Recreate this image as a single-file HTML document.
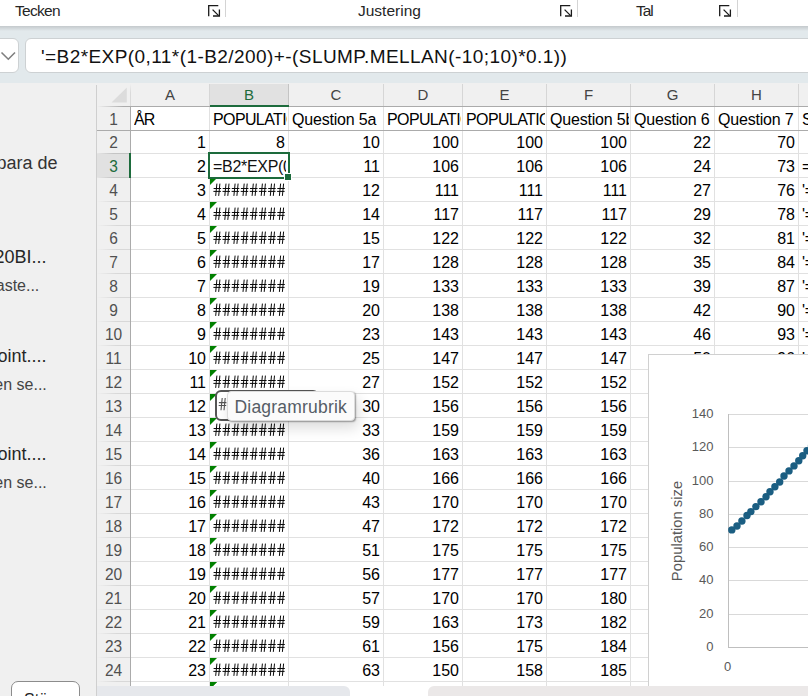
<!DOCTYPE html>
<html><head><meta charset="utf-8"><style>
html,body{margin:0;padding:0;width:808px;height:696px;overflow:hidden;background:#f0f0f0;position:relative;}
.t{position:absolute;white-space:pre;font-family:"Liberation Sans", sans-serif;}
.c{position:absolute;white-space:pre;overflow:hidden;font-family:"Liberation Sans", sans-serif;font-size:16px;line-height:24px;height:24px;transform:scaleY(1.06);transform-origin:0 17.54px;}
</style></head><body>
<div style="position:absolute;left:0px;top:0px;width:808px;height:26px;background:#fff;"></div>
<div class="t" style="left:15px;top:2.88px;font-size:15.5px;line-height:15.5px;color:#262626;letter-spacing:-0.7px;">Tecken</div>
<div class="t" style="left:358px;top:2.88px;font-size:15.5px;line-height:15.5px;color:#262626;">Justering</div>
<div class="t" style="left:636px;top:2.88px;font-size:15.5px;line-height:15.5px;color:#262626;letter-spacing:-1px;">Tal</div>
<svg style="position:absolute;left:207.5px;top:4px" width="14" height="14" viewBox="0 0 14 14"><path d="M0.7 12.2 V1.7 H10.3" fill="none" stroke="#1a1a1a" stroke-width="1.3"/><path d="M4.6 5.6 L10.6 11.6" fill="none" stroke="#1a1a1a" stroke-width="1.3"/><path d="M5 12 H11.4 V5.5" fill="none" stroke="#1a1a1a" stroke-width="1.3"/></svg>
<svg style="position:absolute;left:559.5px;top:4px" width="14" height="14" viewBox="0 0 14 14"><path d="M0.7 12.2 V1.7 H10.3" fill="none" stroke="#1a1a1a" stroke-width="1.3"/><path d="M4.6 5.6 L10.6 11.6" fill="none" stroke="#1a1a1a" stroke-width="1.3"/><path d="M5 12 H11.4 V5.5" fill="none" stroke="#1a1a1a" stroke-width="1.3"/></svg>
<svg style="position:absolute;left:719px;top:4px" width="14" height="14" viewBox="0 0 14 14"><path d="M0.7 12.2 V1.7 H10.3" fill="none" stroke="#1a1a1a" stroke-width="1.3"/><path d="M4.6 5.6 L10.6 11.6" fill="none" stroke="#1a1a1a" stroke-width="1.3"/><path d="M5 12 H11.4 V5.5" fill="none" stroke="#1a1a1a" stroke-width="1.3"/></svg>
<div style="position:absolute;left:225px;top:0px;width:1px;height:17px;background:#d4d4d4;"></div>
<div style="position:absolute;left:577px;top:0px;width:1px;height:17px;background:#d4d4d4;"></div>
<div style="position:absolute;left:737px;top:0px;width:1px;height:17px;background:#d4d4d4;"></div>
<div style="position:absolute;left:0px;top:26px;width:808px;height:57px;background:#e2e9ec;"></div>
<div style="position:absolute;left:0px;top:26px;width:808px;height:5px;background:linear-gradient(#c4c9cc,#e2e9ec);"></div>
<div style="position:absolute;left:-20px;top:38px;width:39px;height:35px;background:#fff;border:1px solid #cdd1d3;border-radius:6px;box-sizing:border-box;"></div>
<svg style="position:absolute;left:0px;top:50px" width="18" height="12" viewBox="0 0 18 12"><path d="M1.5 2.5 L8.3 9.2 L15 2.5" fill="none" stroke="#7f7f7f" stroke-width="1.6"/></svg>
<div style="position:absolute;left:25px;top:38px;width:800px;height:35px;background:#fff;border:1px solid #cdd1d3;border-radius:6px;box-sizing:border-box;"></div>
<div class="t" style="left:41px;top:46.52px;font-size:19px;line-height:19px;color:#111;letter-spacing:0.43px;">'=B2*EXP(0,11*(1-B2/200)+-(SLUMP.MELLAN(-10;10)*0.1))</div>
<div style="position:absolute;left:0px;top:83px;width:96px;height:613px;background:#f0f0f0;"></div>
<div class="t" style="right:750.5px;top:153.76px;font-size:18px;line-height:18px;color:#333;">para de</div>
<div class="t" style="right:761.5px;top:247.76px;font-size:18px;line-height:18px;color:#262626;">20BI...</div>
<div class="t" style="right:768.7px;top:278.46px;font-size:16px;line-height:16px;color:#444;">aste...</div>
<div class="t" style="right:761.5px;top:347.26px;font-size:18px;line-height:18px;color:#262626;">oint....</div>
<div class="t" style="right:761.2px;top:377.46px;font-size:16px;line-height:16px;color:#444;">en se...</div>
<div class="t" style="right:761.5px;top:445.26px;font-size:18px;line-height:18px;color:#262626;">oint....</div>
<div class="t" style="right:761.2px;top:475.46px;font-size:16px;line-height:16px;color:#444;">en se...</div>
<div style="position:absolute;left:11px;top:681px;width:69px;height:30px;background:#fff;border:1px solid #8c8c8c;border-radius:7px;box-sizing:border-box;"></div>
<div class="t" style="left:24px;top:692.46px;font-size:16px;line-height:16px;color:#222;">Stä...</div>
<div style="position:absolute;left:96px;top:83px;width:712px;height:603px;background:#f0f0f0;"></div>
<div style="position:absolute;left:131px;top:107px;width:677px;height:579px;background:#fff;"></div>
<div style="position:absolute;left:96px;top:85px;width:1px;height:611px;background:#cfcfcf;"></div>
<svg style="position:absolute;left:111px;top:87px" width="17" height="17"><path d="M0.5 15.5 L15.8 0.5 L15.8 15.5 Z" fill="#dcdcdc"/></svg>
<div style="position:absolute;left:210px;top:84px;width:78px;height:22px;background:#e1e1e1;"></div>
<div style="position:absolute;left:97px;top:154px;width:33px;height:23px;background:#e1e1e1;"></div>
<div style="position:absolute;left:209px;top:107px;width:1px;height:579px;background:#e1e1e1;"></div>
<div style="position:absolute;left:209px;top:84px;width:1px;height:22px;background:#d6d6d6;"></div>
<div style="position:absolute;left:288px;top:107px;width:1px;height:579px;background:#e1e1e1;"></div>
<div style="position:absolute;left:288px;top:84px;width:1px;height:22px;background:#c4c4c4;"></div>
<div style="position:absolute;left:383px;top:107px;width:1px;height:579px;background:#e1e1e1;"></div>
<div style="position:absolute;left:383px;top:84px;width:1px;height:22px;background:#d6d6d6;"></div>
<div style="position:absolute;left:462px;top:107px;width:1px;height:579px;background:#e1e1e1;"></div>
<div style="position:absolute;left:462px;top:84px;width:1px;height:22px;background:#d6d6d6;"></div>
<div style="position:absolute;left:546px;top:107px;width:1px;height:579px;background:#e1e1e1;"></div>
<div style="position:absolute;left:546px;top:84px;width:1px;height:22px;background:#d6d6d6;"></div>
<div style="position:absolute;left:630px;top:107px;width:1px;height:579px;background:#e1e1e1;"></div>
<div style="position:absolute;left:630px;top:84px;width:1px;height:22px;background:#d6d6d6;"></div>
<div style="position:absolute;left:714px;top:107px;width:1px;height:579px;background:#e1e1e1;"></div>
<div style="position:absolute;left:714px;top:84px;width:1px;height:22px;background:#d6d6d6;"></div>
<div style="position:absolute;left:798px;top:107px;width:1px;height:579px;background:#e1e1e1;"></div>
<div style="position:absolute;left:798px;top:84px;width:1px;height:22px;background:#d6d6d6;"></div>
<div style="position:absolute;left:131px;top:153px;width:677px;height:1px;background:#e1e1e1;"></div>
<div style="position:absolute;left:97px;top:153px;width:33px;height:1px;background:linear-gradient(to right, rgba(190,190,190,0.2), #c4c4c4 50%);"></div>
<div style="position:absolute;left:131px;top:177px;width:677px;height:1px;background:#e1e1e1;"></div>
<div style="position:absolute;left:97px;top:177px;width:33px;height:1px;background:linear-gradient(to right, rgba(190,190,190,0.2), #c4c4c4 50%);"></div>
<div style="position:absolute;left:131px;top:201px;width:677px;height:1px;background:#e1e1e1;"></div>
<div style="position:absolute;left:97px;top:201px;width:33px;height:1px;background:linear-gradient(to right, rgba(218,218,218,0), #d8d8d8 60%);"></div>
<div style="position:absolute;left:131px;top:225px;width:677px;height:1px;background:#e1e1e1;"></div>
<div style="position:absolute;left:97px;top:225px;width:33px;height:1px;background:linear-gradient(to right, rgba(218,218,218,0), #d8d8d8 60%);"></div>
<div style="position:absolute;left:131px;top:249px;width:677px;height:1px;background:#e1e1e1;"></div>
<div style="position:absolute;left:97px;top:249px;width:33px;height:1px;background:linear-gradient(to right, rgba(218,218,218,0), #d8d8d8 60%);"></div>
<div style="position:absolute;left:131px;top:273px;width:677px;height:1px;background:#e1e1e1;"></div>
<div style="position:absolute;left:97px;top:273px;width:33px;height:1px;background:linear-gradient(to right, rgba(218,218,218,0), #d8d8d8 60%);"></div>
<div style="position:absolute;left:131px;top:297px;width:677px;height:1px;background:#e1e1e1;"></div>
<div style="position:absolute;left:97px;top:297px;width:33px;height:1px;background:linear-gradient(to right, rgba(218,218,218,0), #d8d8d8 60%);"></div>
<div style="position:absolute;left:131px;top:321px;width:677px;height:1px;background:#e1e1e1;"></div>
<div style="position:absolute;left:97px;top:321px;width:33px;height:1px;background:linear-gradient(to right, rgba(218,218,218,0), #d8d8d8 60%);"></div>
<div style="position:absolute;left:131px;top:345px;width:677px;height:1px;background:#e1e1e1;"></div>
<div style="position:absolute;left:97px;top:345px;width:33px;height:1px;background:linear-gradient(to right, rgba(218,218,218,0), #d8d8d8 60%);"></div>
<div style="position:absolute;left:131px;top:369px;width:677px;height:1px;background:#e1e1e1;"></div>
<div style="position:absolute;left:97px;top:369px;width:33px;height:1px;background:linear-gradient(to right, rgba(218,218,218,0), #d8d8d8 60%);"></div>
<div style="position:absolute;left:131px;top:393px;width:677px;height:1px;background:#e1e1e1;"></div>
<div style="position:absolute;left:97px;top:393px;width:33px;height:1px;background:linear-gradient(to right, rgba(218,218,218,0), #d8d8d8 60%);"></div>
<div style="position:absolute;left:131px;top:417px;width:677px;height:1px;background:#e1e1e1;"></div>
<div style="position:absolute;left:97px;top:417px;width:33px;height:1px;background:linear-gradient(to right, rgba(218,218,218,0), #d8d8d8 60%);"></div>
<div style="position:absolute;left:131px;top:441px;width:677px;height:1px;background:#e1e1e1;"></div>
<div style="position:absolute;left:97px;top:441px;width:33px;height:1px;background:linear-gradient(to right, rgba(218,218,218,0), #d8d8d8 60%);"></div>
<div style="position:absolute;left:131px;top:465px;width:677px;height:1px;background:#e1e1e1;"></div>
<div style="position:absolute;left:97px;top:465px;width:33px;height:1px;background:linear-gradient(to right, rgba(218,218,218,0), #d8d8d8 60%);"></div>
<div style="position:absolute;left:131px;top:489px;width:677px;height:1px;background:#e1e1e1;"></div>
<div style="position:absolute;left:97px;top:489px;width:33px;height:1px;background:linear-gradient(to right, rgba(218,218,218,0), #d8d8d8 60%);"></div>
<div style="position:absolute;left:131px;top:513px;width:677px;height:1px;background:#e1e1e1;"></div>
<div style="position:absolute;left:97px;top:513px;width:33px;height:1px;background:linear-gradient(to right, rgba(218,218,218,0), #d8d8d8 60%);"></div>
<div style="position:absolute;left:131px;top:537px;width:677px;height:1px;background:#e1e1e1;"></div>
<div style="position:absolute;left:97px;top:537px;width:33px;height:1px;background:linear-gradient(to right, rgba(218,218,218,0), #d8d8d8 60%);"></div>
<div style="position:absolute;left:131px;top:561px;width:677px;height:1px;background:#e1e1e1;"></div>
<div style="position:absolute;left:97px;top:561px;width:33px;height:1px;background:linear-gradient(to right, rgba(218,218,218,0), #d8d8d8 60%);"></div>
<div style="position:absolute;left:131px;top:585px;width:677px;height:1px;background:#e1e1e1;"></div>
<div style="position:absolute;left:97px;top:585px;width:33px;height:1px;background:linear-gradient(to right, rgba(218,218,218,0), #d8d8d8 60%);"></div>
<div style="position:absolute;left:131px;top:609px;width:677px;height:1px;background:#e1e1e1;"></div>
<div style="position:absolute;left:97px;top:609px;width:33px;height:1px;background:linear-gradient(to right, rgba(218,218,218,0), #d8d8d8 60%);"></div>
<div style="position:absolute;left:131px;top:633px;width:677px;height:1px;background:#e1e1e1;"></div>
<div style="position:absolute;left:97px;top:633px;width:33px;height:1px;background:linear-gradient(to right, rgba(218,218,218,0), #d8d8d8 60%);"></div>
<div style="position:absolute;left:131px;top:657px;width:677px;height:1px;background:#e1e1e1;"></div>
<div style="position:absolute;left:97px;top:657px;width:33px;height:1px;background:linear-gradient(to right, rgba(218,218,218,0), #d8d8d8 60%);"></div>
<div style="position:absolute;left:131px;top:681px;width:677px;height:1px;background:#e1e1e1;"></div>
<div style="position:absolute;left:97px;top:681px;width:33px;height:1px;background:linear-gradient(to right, rgba(218,218,218,0), #d8d8d8 60%);"></div>
<div style="position:absolute;left:97px;top:106px;width:33px;height:1px;background:linear-gradient(to right, rgba(171,171,171,0), #ababab 80%);"></div>
<div style="position:absolute;left:130px;top:106px;width:678px;height:1px;background:#ababab;"></div>
<div style="position:absolute;left:97px;top:130px;width:711px;height:1px;background:#ababab;"></div>
<div style="position:absolute;left:130px;top:106px;width:1px;height:580px;background:#ababab;"></div>
<div style="position:absolute;left:130px;top:84px;width:1px;height:22px;background:linear-gradient(rgba(220,220,220,0), #dadada 40%);"></div>
<div style="position:absolute;left:210px;top:105px;width:79px;height:2px;background:#1d6b3c;"></div>
<div style="position:absolute;left:129px;top:153px;width:2px;height:25px;background:#1d6b3c;"></div>
<div class="t" style="left:170.0px;transform:translateX(-50%);top:87.30px;font-size:15px;line-height:15px;color:#444;">A</div>
<div class="t" style="left:249.0px;transform:translateX(-50%);top:87.30px;font-size:15px;line-height:15px;color:#1d6b3c;">B</div>
<div class="t" style="left:336.0px;transform:translateX(-50%);top:87.30px;font-size:15px;line-height:15px;color:#444;">C</div>
<div class="t" style="left:423.0px;transform:translateX(-50%);top:87.30px;font-size:15px;line-height:15px;color:#444;">D</div>
<div class="t" style="left:504.5px;transform:translateX(-50%);top:87.30px;font-size:15px;line-height:15px;color:#444;">E</div>
<div class="t" style="left:588.5px;transform:translateX(-50%);top:87.30px;font-size:15px;line-height:15px;color:#444;">F</div>
<div class="t" style="left:672.5px;transform:translateX(-50%);top:87.30px;font-size:15px;line-height:15px;color:#444;">G</div>
<div class="t" style="left:756.5px;transform:translateX(-50%);top:87.30px;font-size:15px;line-height:15px;color:#444;">H</div>
<div class="t" style="left:849.5px;transform:translateX(-50%);top:87.30px;font-size:15px;line-height:15px;color:#444;">I</div>
<div class="t" style="left:113.5px;transform:translateX(-50%);top:112.38px;font-size:15.5px;line-height:15.5px;color:#505050;transform:translateX(-50%) scaleY(1.05);transform-origin:50% 13.12px;">1</div>
<div class="t" style="left:113.5px;transform:translateX(-50%);top:135.38px;font-size:15.5px;line-height:15.5px;color:#505050;transform:translateX(-50%) scaleY(1.05);transform-origin:50% 13.12px;">2</div>
<div class="t" style="left:113.5px;transform:translateX(-50%);top:159.38px;font-size:15.5px;line-height:15.5px;color:#1d6b3c;transform:translateX(-50%) scaleY(1.05);transform-origin:50% 13.12px;">3</div>
<div class="t" style="left:113.5px;transform:translateX(-50%);top:183.38px;font-size:15.5px;line-height:15.5px;color:#505050;transform:translateX(-50%) scaleY(1.05);transform-origin:50% 13.12px;">4</div>
<div class="t" style="left:113.5px;transform:translateX(-50%);top:207.38px;font-size:15.5px;line-height:15.5px;color:#505050;transform:translateX(-50%) scaleY(1.05);transform-origin:50% 13.12px;">5</div>
<div class="t" style="left:113.5px;transform:translateX(-50%);top:231.38px;font-size:15.5px;line-height:15.5px;color:#505050;transform:translateX(-50%) scaleY(1.05);transform-origin:50% 13.12px;">6</div>
<div class="t" style="left:113.5px;transform:translateX(-50%);top:255.38px;font-size:15.5px;line-height:15.5px;color:#505050;transform:translateX(-50%) scaleY(1.05);transform-origin:50% 13.12px;">7</div>
<div class="t" style="left:113.5px;transform:translateX(-50%);top:279.38px;font-size:15.5px;line-height:15.5px;color:#505050;transform:translateX(-50%) scaleY(1.05);transform-origin:50% 13.12px;">8</div>
<div class="t" style="left:113.5px;transform:translateX(-50%);top:303.38px;font-size:15.5px;line-height:15.5px;color:#505050;transform:translateX(-50%) scaleY(1.05);transform-origin:50% 13.12px;">9</div>
<div class="t" style="left:113.5px;transform:translateX(-50%);top:327.38px;font-size:15.5px;line-height:15.5px;color:#505050;transform:translateX(-50%) scaleY(1.05);transform-origin:50% 13.12px;">10</div>
<div class="t" style="left:113.5px;transform:translateX(-50%);top:351.38px;font-size:15.5px;line-height:15.5px;color:#505050;transform:translateX(-50%) scaleY(1.05);transform-origin:50% 13.12px;">11</div>
<div class="t" style="left:113.5px;transform:translateX(-50%);top:375.38px;font-size:15.5px;line-height:15.5px;color:#505050;transform:translateX(-50%) scaleY(1.05);transform-origin:50% 13.12px;">12</div>
<div class="t" style="left:113.5px;transform:translateX(-50%);top:399.38px;font-size:15.5px;line-height:15.5px;color:#505050;transform:translateX(-50%) scaleY(1.05);transform-origin:50% 13.12px;">13</div>
<div class="t" style="left:113.5px;transform:translateX(-50%);top:423.38px;font-size:15.5px;line-height:15.5px;color:#505050;transform:translateX(-50%) scaleY(1.05);transform-origin:50% 13.12px;">14</div>
<div class="t" style="left:113.5px;transform:translateX(-50%);top:447.38px;font-size:15.5px;line-height:15.5px;color:#505050;transform:translateX(-50%) scaleY(1.05);transform-origin:50% 13.12px;">15</div>
<div class="t" style="left:113.5px;transform:translateX(-50%);top:471.38px;font-size:15.5px;line-height:15.5px;color:#505050;transform:translateX(-50%) scaleY(1.05);transform-origin:50% 13.12px;">16</div>
<div class="t" style="left:113.5px;transform:translateX(-50%);top:495.38px;font-size:15.5px;line-height:15.5px;color:#505050;transform:translateX(-50%) scaleY(1.05);transform-origin:50% 13.12px;">17</div>
<div class="t" style="left:113.5px;transform:translateX(-50%);top:519.38px;font-size:15.5px;line-height:15.5px;color:#505050;transform:translateX(-50%) scaleY(1.05);transform-origin:50% 13.12px;">18</div>
<div class="t" style="left:113.5px;transform:translateX(-50%);top:543.38px;font-size:15.5px;line-height:15.5px;color:#505050;transform:translateX(-50%) scaleY(1.05);transform-origin:50% 13.12px;">19</div>
<div class="t" style="left:113.5px;transform:translateX(-50%);top:567.38px;font-size:15.5px;line-height:15.5px;color:#505050;transform:translateX(-50%) scaleY(1.05);transform-origin:50% 13.12px;">20</div>
<div class="t" style="left:113.5px;transform:translateX(-50%);top:591.38px;font-size:15.5px;line-height:15.5px;color:#505050;transform:translateX(-50%) scaleY(1.05);transform-origin:50% 13.12px;">21</div>
<div class="t" style="left:113.5px;transform:translateX(-50%);top:615.38px;font-size:15.5px;line-height:15.5px;color:#505050;transform:translateX(-50%) scaleY(1.05);transform-origin:50% 13.12px;">22</div>
<div class="t" style="left:113.5px;transform:translateX(-50%);top:639.38px;font-size:15.5px;line-height:15.5px;color:#505050;transform:translateX(-50%) scaleY(1.05);transform-origin:50% 13.12px;">23</div>
<div class="t" style="left:113.5px;transform:translateX(-50%);top:663.38px;font-size:15.5px;line-height:15.5px;color:#505050;transform:translateX(-50%) scaleY(1.05);transform-origin:50% 13.12px;">24</div>
<div class="c" style="left:134px;top:107.56px;width:74px;color:#000;letter-spacing:-1.0px">ÅR</div>
<div class="c" style="left:213px;top:107.56px;width:74px;color:#000;letter-spacing:-0.62px">POPULATIONSSTORLEK</div>
<div class="c" style="left:292px;top:107.56px;width:90px;color:#000;letter-spacing:-0.2px">Question 5a</div>
<div class="c" style="left:387px;top:107.56px;width:74px;color:#000;letter-spacing:-0.62px">POPULATIONSSTORLEK</div>
<div class="c" style="left:466px;top:107.56px;width:79px;color:#000;letter-spacing:-0.62px">POPULATIONSSTORLEK</div>
<div class="c" style="left:550px;top:107.56px;width:79px;color:#000;letter-spacing:-0.2px">Question 5b</div>
<div class="c" style="left:634px;top:107.56px;width:79px;color:#000;letter-spacing:-0.2px">Question 6</div>
<div class="c" style="left:718px;top:107.56px;width:79px;color:#000;letter-spacing:-0.2px">Question 7</div>
<div class="c" style="left:802px;top:107.56px;width:97px;color:#000;letter-spacing:-0.2px">S</div>
<div class="c" style="left:131px;top:130.56px;width:75px;text-align:right;color:#000">1</div>
<div class="c" style="left:210px;top:130.56px;width:75px;text-align:right;color:#000">8</div>
<div class="c" style="left:289px;top:130.56px;width:91px;text-align:right;color:#000">10</div>
<div class="c" style="left:384px;top:130.56px;width:75px;text-align:right;color:#000">100</div>
<div class="c" style="left:463px;top:130.56px;width:80px;text-align:right;color:#000">100</div>
<div class="c" style="left:547px;top:130.56px;width:80px;text-align:right;color:#000">100</div>
<div class="c" style="left:631px;top:130.56px;width:80px;text-align:right;color:#000">22</div>
<div class="c" style="left:715px;top:130.56px;width:80px;text-align:right;color:#000">70</div>
<div class="c" style="left:131px;top:154.56px;width:75px;text-align:right;color:#000">2</div>
<div class="c" style="left:289px;top:154.56px;width:91px;text-align:right;color:#000">11</div>
<div class="c" style="left:384px;top:154.56px;width:75px;text-align:right;color:#000">106</div>
<div class="c" style="left:463px;top:154.56px;width:80px;text-align:right;color:#000">106</div>
<div class="c" style="left:547px;top:154.56px;width:80px;text-align:right;color:#000">106</div>
<div class="c" style="left:631px;top:154.56px;width:80px;text-align:right;color:#000">24</div>
<div class="c" style="left:715px;top:154.56px;width:80px;text-align:right;color:#000">73</div>
<div class="c" style="left:802px;top:154.56px;width:97px;color:#000;letter-spacing:-0.2px">=</div>
<div class="c" style="left:131px;top:178.56px;width:75px;text-align:right;color:#000">3</div>
<div class="c" style="left:289px;top:178.56px;width:91px;text-align:right;color:#000">12</div>
<div class="c" style="left:384px;top:178.56px;width:75px;text-align:right;color:#000">111</div>
<div class="c" style="left:463px;top:178.56px;width:80px;text-align:right;color:#000">111</div>
<div class="c" style="left:547px;top:178.56px;width:80px;text-align:right;color:#000">111</div>
<div class="c" style="left:631px;top:178.56px;width:80px;text-align:right;color:#000">27</div>
<div class="c" style="left:715px;top:178.56px;width:80px;text-align:right;color:#000">76</div>
<div class="c" style="left:802px;top:178.56px;width:97px;color:#000;letter-spacing:-0.2px">'=</div>
<div class="c" style="left:131px;top:202.56px;width:75px;text-align:right;color:#000">4</div>
<div class="c" style="left:289px;top:202.56px;width:91px;text-align:right;color:#000">14</div>
<div class="c" style="left:384px;top:202.56px;width:75px;text-align:right;color:#000">117</div>
<div class="c" style="left:463px;top:202.56px;width:80px;text-align:right;color:#000">117</div>
<div class="c" style="left:547px;top:202.56px;width:80px;text-align:right;color:#000">117</div>
<div class="c" style="left:631px;top:202.56px;width:80px;text-align:right;color:#000">29</div>
<div class="c" style="left:715px;top:202.56px;width:80px;text-align:right;color:#000">78</div>
<div class="c" style="left:802px;top:202.56px;width:97px;color:#000;letter-spacing:-0.2px">'=</div>
<div class="c" style="left:131px;top:226.56px;width:75px;text-align:right;color:#000">5</div>
<div class="c" style="left:289px;top:226.56px;width:91px;text-align:right;color:#000">15</div>
<div class="c" style="left:384px;top:226.56px;width:75px;text-align:right;color:#000">122</div>
<div class="c" style="left:463px;top:226.56px;width:80px;text-align:right;color:#000">122</div>
<div class="c" style="left:547px;top:226.56px;width:80px;text-align:right;color:#000">122</div>
<div class="c" style="left:631px;top:226.56px;width:80px;text-align:right;color:#000">32</div>
<div class="c" style="left:715px;top:226.56px;width:80px;text-align:right;color:#000">81</div>
<div class="c" style="left:802px;top:226.56px;width:97px;color:#000;letter-spacing:-0.2px">'=</div>
<div class="c" style="left:131px;top:250.56px;width:75px;text-align:right;color:#000">6</div>
<div class="c" style="left:289px;top:250.56px;width:91px;text-align:right;color:#000">17</div>
<div class="c" style="left:384px;top:250.56px;width:75px;text-align:right;color:#000">128</div>
<div class="c" style="left:463px;top:250.56px;width:80px;text-align:right;color:#000">128</div>
<div class="c" style="left:547px;top:250.56px;width:80px;text-align:right;color:#000">128</div>
<div class="c" style="left:631px;top:250.56px;width:80px;text-align:right;color:#000">35</div>
<div class="c" style="left:715px;top:250.56px;width:80px;text-align:right;color:#000">84</div>
<div class="c" style="left:802px;top:250.56px;width:97px;color:#000;letter-spacing:-0.2px">'=</div>
<div class="c" style="left:131px;top:274.56px;width:75px;text-align:right;color:#000">7</div>
<div class="c" style="left:289px;top:274.56px;width:91px;text-align:right;color:#000">19</div>
<div class="c" style="left:384px;top:274.56px;width:75px;text-align:right;color:#000">133</div>
<div class="c" style="left:463px;top:274.56px;width:80px;text-align:right;color:#000">133</div>
<div class="c" style="left:547px;top:274.56px;width:80px;text-align:right;color:#000">133</div>
<div class="c" style="left:631px;top:274.56px;width:80px;text-align:right;color:#000">39</div>
<div class="c" style="left:715px;top:274.56px;width:80px;text-align:right;color:#000">87</div>
<div class="c" style="left:802px;top:274.56px;width:97px;color:#000;letter-spacing:-0.2px">'=</div>
<div class="c" style="left:131px;top:298.56px;width:75px;text-align:right;color:#000">8</div>
<div class="c" style="left:289px;top:298.56px;width:91px;text-align:right;color:#000">20</div>
<div class="c" style="left:384px;top:298.56px;width:75px;text-align:right;color:#000">138</div>
<div class="c" style="left:463px;top:298.56px;width:80px;text-align:right;color:#000">138</div>
<div class="c" style="left:547px;top:298.56px;width:80px;text-align:right;color:#000">138</div>
<div class="c" style="left:631px;top:298.56px;width:80px;text-align:right;color:#000">42</div>
<div class="c" style="left:715px;top:298.56px;width:80px;text-align:right;color:#000">90</div>
<div class="c" style="left:802px;top:298.56px;width:97px;color:#000;letter-spacing:-0.2px">'=</div>
<div class="c" style="left:131px;top:322.56px;width:75px;text-align:right;color:#000">9</div>
<div class="c" style="left:289px;top:322.56px;width:91px;text-align:right;color:#000">23</div>
<div class="c" style="left:384px;top:322.56px;width:75px;text-align:right;color:#000">143</div>
<div class="c" style="left:463px;top:322.56px;width:80px;text-align:right;color:#000">143</div>
<div class="c" style="left:547px;top:322.56px;width:80px;text-align:right;color:#000">143</div>
<div class="c" style="left:631px;top:322.56px;width:80px;text-align:right;color:#000">46</div>
<div class="c" style="left:715px;top:322.56px;width:80px;text-align:right;color:#000">93</div>
<div class="c" style="left:802px;top:322.56px;width:97px;color:#000;letter-spacing:-0.2px">'=</div>
<div class="c" style="left:131px;top:346.56px;width:75px;text-align:right;color:#000">10</div>
<div class="c" style="left:289px;top:346.56px;width:91px;text-align:right;color:#000">25</div>
<div class="c" style="left:384px;top:346.56px;width:75px;text-align:right;color:#000">147</div>
<div class="c" style="left:463px;top:346.56px;width:80px;text-align:right;color:#000">147</div>
<div class="c" style="left:547px;top:346.56px;width:80px;text-align:right;color:#000">147</div>
<div class="c" style="left:631px;top:346.56px;width:80px;text-align:right;color:#000">50</div>
<div class="c" style="left:715px;top:346.56px;width:80px;text-align:right;color:#000">96</div>
<div class="c" style="left:802px;top:346.56px;width:97px;color:#000;letter-spacing:-0.2px">'=</div>
<div class="c" style="left:131px;top:370.56px;width:75px;text-align:right;color:#000">11</div>
<div class="c" style="left:289px;top:370.56px;width:91px;text-align:right;color:#000">27</div>
<div class="c" style="left:384px;top:370.56px;width:75px;text-align:right;color:#000">152</div>
<div class="c" style="left:463px;top:370.56px;width:80px;text-align:right;color:#000">152</div>
<div class="c" style="left:547px;top:370.56px;width:80px;text-align:right;color:#000">152</div>
<div class="c" style="left:802px;top:370.56px;width:97px;color:#000;letter-spacing:-0.2px">'=</div>
<div class="c" style="left:131px;top:394.56px;width:75px;text-align:right;color:#000">12</div>
<div class="c" style="left:289px;top:394.56px;width:91px;text-align:right;color:#000">30</div>
<div class="c" style="left:384px;top:394.56px;width:75px;text-align:right;color:#000">156</div>
<div class="c" style="left:463px;top:394.56px;width:80px;text-align:right;color:#000">156</div>
<div class="c" style="left:547px;top:394.56px;width:80px;text-align:right;color:#000">156</div>
<div class="c" style="left:802px;top:394.56px;width:97px;color:#000;letter-spacing:-0.2px">'=</div>
<div class="c" style="left:131px;top:418.56px;width:75px;text-align:right;color:#000">13</div>
<div class="c" style="left:289px;top:418.56px;width:91px;text-align:right;color:#000">33</div>
<div class="c" style="left:384px;top:418.56px;width:75px;text-align:right;color:#000">159</div>
<div class="c" style="left:463px;top:418.56px;width:80px;text-align:right;color:#000">159</div>
<div class="c" style="left:547px;top:418.56px;width:80px;text-align:right;color:#000">159</div>
<div class="c" style="left:802px;top:418.56px;width:97px;color:#000;letter-spacing:-0.2px">'=</div>
<div class="c" style="left:131px;top:442.56px;width:75px;text-align:right;color:#000">14</div>
<div class="c" style="left:289px;top:442.56px;width:91px;text-align:right;color:#000">36</div>
<div class="c" style="left:384px;top:442.56px;width:75px;text-align:right;color:#000">163</div>
<div class="c" style="left:463px;top:442.56px;width:80px;text-align:right;color:#000">163</div>
<div class="c" style="left:547px;top:442.56px;width:80px;text-align:right;color:#000">163</div>
<div class="c" style="left:802px;top:442.56px;width:97px;color:#000;letter-spacing:-0.2px">'=</div>
<div class="c" style="left:131px;top:466.56px;width:75px;text-align:right;color:#000">15</div>
<div class="c" style="left:289px;top:466.56px;width:91px;text-align:right;color:#000">40</div>
<div class="c" style="left:384px;top:466.56px;width:75px;text-align:right;color:#000">166</div>
<div class="c" style="left:463px;top:466.56px;width:80px;text-align:right;color:#000">166</div>
<div class="c" style="left:547px;top:466.56px;width:80px;text-align:right;color:#000">166</div>
<div class="c" style="left:802px;top:466.56px;width:97px;color:#000;letter-spacing:-0.2px">'=</div>
<div class="c" style="left:131px;top:490.56px;width:75px;text-align:right;color:#000">16</div>
<div class="c" style="left:289px;top:490.56px;width:91px;text-align:right;color:#000">43</div>
<div class="c" style="left:384px;top:490.56px;width:75px;text-align:right;color:#000">170</div>
<div class="c" style="left:463px;top:490.56px;width:80px;text-align:right;color:#000">170</div>
<div class="c" style="left:547px;top:490.56px;width:80px;text-align:right;color:#000">170</div>
<div class="c" style="left:802px;top:490.56px;width:97px;color:#000;letter-spacing:-0.2px">'=</div>
<div class="c" style="left:131px;top:514.56px;width:75px;text-align:right;color:#000">17</div>
<div class="c" style="left:289px;top:514.56px;width:91px;text-align:right;color:#000">47</div>
<div class="c" style="left:384px;top:514.56px;width:75px;text-align:right;color:#000">172</div>
<div class="c" style="left:463px;top:514.56px;width:80px;text-align:right;color:#000">172</div>
<div class="c" style="left:547px;top:514.56px;width:80px;text-align:right;color:#000">172</div>
<div class="c" style="left:802px;top:514.56px;width:97px;color:#000;letter-spacing:-0.2px">'=</div>
<div class="c" style="left:131px;top:538.56px;width:75px;text-align:right;color:#000">18</div>
<div class="c" style="left:289px;top:538.56px;width:91px;text-align:right;color:#000">51</div>
<div class="c" style="left:384px;top:538.56px;width:75px;text-align:right;color:#000">175</div>
<div class="c" style="left:463px;top:538.56px;width:80px;text-align:right;color:#000">175</div>
<div class="c" style="left:547px;top:538.56px;width:80px;text-align:right;color:#000">175</div>
<div class="c" style="left:802px;top:538.56px;width:97px;color:#000;letter-spacing:-0.2px">'=</div>
<div class="c" style="left:131px;top:562.56px;width:75px;text-align:right;color:#000">19</div>
<div class="c" style="left:289px;top:562.56px;width:91px;text-align:right;color:#000">56</div>
<div class="c" style="left:384px;top:562.56px;width:75px;text-align:right;color:#000">177</div>
<div class="c" style="left:463px;top:562.56px;width:80px;text-align:right;color:#000">177</div>
<div class="c" style="left:547px;top:562.56px;width:80px;text-align:right;color:#000">177</div>
<div class="c" style="left:802px;top:562.56px;width:97px;color:#000;letter-spacing:-0.2px">'=</div>
<div class="c" style="left:131px;top:586.56px;width:75px;text-align:right;color:#000">20</div>
<div class="c" style="left:289px;top:586.56px;width:91px;text-align:right;color:#000">57</div>
<div class="c" style="left:384px;top:586.56px;width:75px;text-align:right;color:#000">170</div>
<div class="c" style="left:463px;top:586.56px;width:80px;text-align:right;color:#000">170</div>
<div class="c" style="left:547px;top:586.56px;width:80px;text-align:right;color:#000">180</div>
<div class="c" style="left:802px;top:586.56px;width:97px;color:#000;letter-spacing:-0.2px">'=</div>
<div class="c" style="left:131px;top:610.56px;width:75px;text-align:right;color:#000">21</div>
<div class="c" style="left:289px;top:610.56px;width:91px;text-align:right;color:#000">59</div>
<div class="c" style="left:384px;top:610.56px;width:75px;text-align:right;color:#000">163</div>
<div class="c" style="left:463px;top:610.56px;width:80px;text-align:right;color:#000">173</div>
<div class="c" style="left:547px;top:610.56px;width:80px;text-align:right;color:#000">182</div>
<div class="c" style="left:802px;top:610.56px;width:97px;color:#000;letter-spacing:-0.2px">'=</div>
<div class="c" style="left:131px;top:634.56px;width:75px;text-align:right;color:#000">22</div>
<div class="c" style="left:289px;top:634.56px;width:91px;text-align:right;color:#000">61</div>
<div class="c" style="left:384px;top:634.56px;width:75px;text-align:right;color:#000">156</div>
<div class="c" style="left:463px;top:634.56px;width:80px;text-align:right;color:#000">175</div>
<div class="c" style="left:547px;top:634.56px;width:80px;text-align:right;color:#000">184</div>
<div class="c" style="left:802px;top:634.56px;width:97px;color:#000;letter-spacing:-0.2px">'=</div>
<div class="c" style="left:131px;top:658.56px;width:75px;text-align:right;color:#000">23</div>
<div class="c" style="left:289px;top:658.56px;width:91px;text-align:right;color:#000">63</div>
<div class="c" style="left:384px;top:658.56px;width:75px;text-align:right;color:#000">150</div>
<div class="c" style="left:463px;top:658.56px;width:80px;text-align:right;color:#000">158</div>
<div class="c" style="left:547px;top:658.56px;width:80px;text-align:right;color:#000">185</div>
<div class="c" style="left:802px;top:658.56px;width:97px;color:#000;letter-spacing:-0.2px">'=</div>
<svg style="position:absolute;left:210px;top:178px" width="7" height="7"><path d="M0 0 H7 L0 7 Z" fill="#008000"/></svg>
<svg style="position:absolute;left:210px;top:202px" width="7" height="7"><path d="M0 0 H7 L0 7 Z" fill="#008000"/></svg>
<svg style="position:absolute;left:210px;top:226px" width="7" height="7"><path d="M0 0 H7 L0 7 Z" fill="#008000"/></svg>
<svg style="position:absolute;left:210px;top:250px" width="7" height="7"><path d="M0 0 H7 L0 7 Z" fill="#008000"/></svg>
<svg style="position:absolute;left:210px;top:274px" width="7" height="7"><path d="M0 0 H7 L0 7 Z" fill="#008000"/></svg>
<svg style="position:absolute;left:210px;top:298px" width="7" height="7"><path d="M0 0 H7 L0 7 Z" fill="#008000"/></svg>
<svg style="position:absolute;left:210px;top:322px" width="7" height="7"><path d="M0 0 H7 L0 7 Z" fill="#008000"/></svg>
<svg style="position:absolute;left:210px;top:346px" width="7" height="7"><path d="M0 0 H7 L0 7 Z" fill="#008000"/></svg>
<svg style="position:absolute;left:210px;top:370px" width="7" height="7"><path d="M0 0 H7 L0 7 Z" fill="#008000"/></svg>
<svg style="position:absolute;left:210px;top:394px" width="7" height="7"><path d="M0 0 H7 L0 7 Z" fill="#008000"/></svg>
<svg style="position:absolute;left:210px;top:418px" width="7" height="7"><path d="M0 0 H7 L0 7 Z" fill="#008000"/></svg>
<svg style="position:absolute;left:210px;top:442px" width="7" height="7"><path d="M0 0 H7 L0 7 Z" fill="#008000"/></svg>
<svg style="position:absolute;left:210px;top:466px" width="7" height="7"><path d="M0 0 H7 L0 7 Z" fill="#008000"/></svg>
<svg style="position:absolute;left:210px;top:490px" width="7" height="7"><path d="M0 0 H7 L0 7 Z" fill="#008000"/></svg>
<svg style="position:absolute;left:210px;top:514px" width="7" height="7"><path d="M0 0 H7 L0 7 Z" fill="#008000"/></svg>
<svg style="position:absolute;left:210px;top:538px" width="7" height="7"><path d="M0 0 H7 L0 7 Z" fill="#008000"/></svg>
<svg style="position:absolute;left:210px;top:562px" width="7" height="7"><path d="M0 0 H7 L0 7 Z" fill="#008000"/></svg>
<svg style="position:absolute;left:210px;top:586px" width="7" height="7"><path d="M0 0 H7 L0 7 Z" fill="#008000"/></svg>
<svg style="position:absolute;left:210px;top:610px" width="7" height="7"><path d="M0 0 H7 L0 7 Z" fill="#008000"/></svg>
<svg style="position:absolute;left:210px;top:634px" width="7" height="7"><path d="M0 0 H7 L0 7 Z" fill="#008000"/></svg>
<svg style="position:absolute;left:210px;top:658px" width="7" height="7"><path d="M0 0 H7 L0 7 Z" fill="#008000"/></svg>
<svg style="position:absolute;left:210px;top:682px" width="7" height="7"><path d="M0 0 H7 L0 7 Z" fill="#008000"/></svg>
<svg style="position:absolute;left:210px;top:682px" width="7" height="4"><path d="M0 0 H7 L3 4 H0 Z" fill="#008000"/></svg>
<svg style="position:absolute;left:0;top:0" width="808" height="696"><path d="M216.90 183.60L215.70 195.90M219.90 183.60L218.70 195.90M213.60 188.50H221.10M213.40 191.40H220.90M226.00 183.60L224.80 195.90M229.00 183.60L227.80 195.90M222.70 188.50H230.20M222.50 191.40H230.00M235.10 183.60L233.90 195.90M238.10 183.60L236.90 195.90M231.80 188.50H239.30M231.60 191.40H239.10M244.20 183.60L243.00 195.90M247.20 183.60L246.00 195.90M240.90 188.50H248.40M240.70 191.40H248.20M253.30 183.60L252.10 195.90M256.30 183.60L255.10 195.90M250.00 188.50H257.50M249.80 191.40H257.30M262.40 183.60L261.20 195.90M265.40 183.60L264.20 195.90M259.10 188.50H266.60M258.90 191.40H266.40M271.50 183.60L270.30 195.90M274.50 183.60L273.30 195.90M268.20 188.50H275.70M268.00 191.40H275.50M280.60 183.60L279.40 195.90M283.60 183.60L282.40 195.90M277.30 188.50H284.80M277.10 191.40H284.60M216.90 207.60L215.70 219.90M219.90 207.60L218.70 219.90M213.60 212.50H221.10M213.40 215.40H220.90M226.00 207.60L224.80 219.90M229.00 207.60L227.80 219.90M222.70 212.50H230.20M222.50 215.40H230.00M235.10 207.60L233.90 219.90M238.10 207.60L236.90 219.90M231.80 212.50H239.30M231.60 215.40H239.10M244.20 207.60L243.00 219.90M247.20 207.60L246.00 219.90M240.90 212.50H248.40M240.70 215.40H248.20M253.30 207.60L252.10 219.90M256.30 207.60L255.10 219.90M250.00 212.50H257.50M249.80 215.40H257.30M262.40 207.60L261.20 219.90M265.40 207.60L264.20 219.90M259.10 212.50H266.60M258.90 215.40H266.40M271.50 207.60L270.30 219.90M274.50 207.60L273.30 219.90M268.20 212.50H275.70M268.00 215.40H275.50M280.60 207.60L279.40 219.90M283.60 207.60L282.40 219.90M277.30 212.50H284.80M277.10 215.40H284.60M216.90 231.60L215.70 243.90M219.90 231.60L218.70 243.90M213.60 236.50H221.10M213.40 239.40H220.90M226.00 231.60L224.80 243.90M229.00 231.60L227.80 243.90M222.70 236.50H230.20M222.50 239.40H230.00M235.10 231.60L233.90 243.90M238.10 231.60L236.90 243.90M231.80 236.50H239.30M231.60 239.40H239.10M244.20 231.60L243.00 243.90M247.20 231.60L246.00 243.90M240.90 236.50H248.40M240.70 239.40H248.20M253.30 231.60L252.10 243.90M256.30 231.60L255.10 243.90M250.00 236.50H257.50M249.80 239.40H257.30M262.40 231.60L261.20 243.90M265.40 231.60L264.20 243.90M259.10 236.50H266.60M258.90 239.40H266.40M271.50 231.60L270.30 243.90M274.50 231.60L273.30 243.90M268.20 236.50H275.70M268.00 239.40H275.50M280.60 231.60L279.40 243.90M283.60 231.60L282.40 243.90M277.30 236.50H284.80M277.10 239.40H284.60M216.90 255.60L215.70 267.90M219.90 255.60L218.70 267.90M213.60 260.50H221.10M213.40 263.40H220.90M226.00 255.60L224.80 267.90M229.00 255.60L227.80 267.90M222.70 260.50H230.20M222.50 263.40H230.00M235.10 255.60L233.90 267.90M238.10 255.60L236.90 267.90M231.80 260.50H239.30M231.60 263.40H239.10M244.20 255.60L243.00 267.90M247.20 255.60L246.00 267.90M240.90 260.50H248.40M240.70 263.40H248.20M253.30 255.60L252.10 267.90M256.30 255.60L255.10 267.90M250.00 260.50H257.50M249.80 263.40H257.30M262.40 255.60L261.20 267.90M265.40 255.60L264.20 267.90M259.10 260.50H266.60M258.90 263.40H266.40M271.50 255.60L270.30 267.90M274.50 255.60L273.30 267.90M268.20 260.50H275.70M268.00 263.40H275.50M280.60 255.60L279.40 267.90M283.60 255.60L282.40 267.90M277.30 260.50H284.80M277.10 263.40H284.60M216.90 279.60L215.70 291.90M219.90 279.60L218.70 291.90M213.60 284.50H221.10M213.40 287.40H220.90M226.00 279.60L224.80 291.90M229.00 279.60L227.80 291.90M222.70 284.50H230.20M222.50 287.40H230.00M235.10 279.60L233.90 291.90M238.10 279.60L236.90 291.90M231.80 284.50H239.30M231.60 287.40H239.10M244.20 279.60L243.00 291.90M247.20 279.60L246.00 291.90M240.90 284.50H248.40M240.70 287.40H248.20M253.30 279.60L252.10 291.90M256.30 279.60L255.10 291.90M250.00 284.50H257.50M249.80 287.40H257.30M262.40 279.60L261.20 291.90M265.40 279.60L264.20 291.90M259.10 284.50H266.60M258.90 287.40H266.40M271.50 279.60L270.30 291.90M274.50 279.60L273.30 291.90M268.20 284.50H275.70M268.00 287.40H275.50M280.60 279.60L279.40 291.90M283.60 279.60L282.40 291.90M277.30 284.50H284.80M277.10 287.40H284.60M216.90 303.60L215.70 315.90M219.90 303.60L218.70 315.90M213.60 308.50H221.10M213.40 311.40H220.90M226.00 303.60L224.80 315.90M229.00 303.60L227.80 315.90M222.70 308.50H230.20M222.50 311.40H230.00M235.10 303.60L233.90 315.90M238.10 303.60L236.90 315.90M231.80 308.50H239.30M231.60 311.40H239.10M244.20 303.60L243.00 315.90M247.20 303.60L246.00 315.90M240.90 308.50H248.40M240.70 311.40H248.20M253.30 303.60L252.10 315.90M256.30 303.60L255.10 315.90M250.00 308.50H257.50M249.80 311.40H257.30M262.40 303.60L261.20 315.90M265.40 303.60L264.20 315.90M259.10 308.50H266.60M258.90 311.40H266.40M271.50 303.60L270.30 315.90M274.50 303.60L273.30 315.90M268.20 308.50H275.70M268.00 311.40H275.50M280.60 303.60L279.40 315.90M283.60 303.60L282.40 315.90M277.30 308.50H284.80M277.10 311.40H284.60M216.90 327.60L215.70 339.90M219.90 327.60L218.70 339.90M213.60 332.50H221.10M213.40 335.40H220.90M226.00 327.60L224.80 339.90M229.00 327.60L227.80 339.90M222.70 332.50H230.20M222.50 335.40H230.00M235.10 327.60L233.90 339.90M238.10 327.60L236.90 339.90M231.80 332.50H239.30M231.60 335.40H239.10M244.20 327.60L243.00 339.90M247.20 327.60L246.00 339.90M240.90 332.50H248.40M240.70 335.40H248.20M253.30 327.60L252.10 339.90M256.30 327.60L255.10 339.90M250.00 332.50H257.50M249.80 335.40H257.30M262.40 327.60L261.20 339.90M265.40 327.60L264.20 339.90M259.10 332.50H266.60M258.90 335.40H266.40M271.50 327.60L270.30 339.90M274.50 327.60L273.30 339.90M268.20 332.50H275.70M268.00 335.40H275.50M280.60 327.60L279.40 339.90M283.60 327.60L282.40 339.90M277.30 332.50H284.80M277.10 335.40H284.60M216.90 351.60L215.70 363.90M219.90 351.60L218.70 363.90M213.60 356.50H221.10M213.40 359.40H220.90M226.00 351.60L224.80 363.90M229.00 351.60L227.80 363.90M222.70 356.50H230.20M222.50 359.40H230.00M235.10 351.60L233.90 363.90M238.10 351.60L236.90 363.90M231.80 356.50H239.30M231.60 359.40H239.10M244.20 351.60L243.00 363.90M247.20 351.60L246.00 363.90M240.90 356.50H248.40M240.70 359.40H248.20M253.30 351.60L252.10 363.90M256.30 351.60L255.10 363.90M250.00 356.50H257.50M249.80 359.40H257.30M262.40 351.60L261.20 363.90M265.40 351.60L264.20 363.90M259.10 356.50H266.60M258.90 359.40H266.40M271.50 351.60L270.30 363.90M274.50 351.60L273.30 363.90M268.20 356.50H275.70M268.00 359.40H275.50M280.60 351.60L279.40 363.90M283.60 351.60L282.40 363.90M277.30 356.50H284.80M277.10 359.40H284.60M216.90 375.60L215.70 387.90M219.90 375.60L218.70 387.90M213.60 380.50H221.10M213.40 383.40H220.90M226.00 375.60L224.80 387.90M229.00 375.60L227.80 387.90M222.70 380.50H230.20M222.50 383.40H230.00M235.10 375.60L233.90 387.90M238.10 375.60L236.90 387.90M231.80 380.50H239.30M231.60 383.40H239.10M244.20 375.60L243.00 387.90M247.20 375.60L246.00 387.90M240.90 380.50H248.40M240.70 383.40H248.20M253.30 375.60L252.10 387.90M256.30 375.60L255.10 387.90M250.00 380.50H257.50M249.80 383.40H257.30M262.40 375.60L261.20 387.90M265.40 375.60L264.20 387.90M259.10 380.50H266.60M258.90 383.40H266.40M271.50 375.60L270.30 387.90M274.50 375.60L273.30 387.90M268.20 380.50H275.70M268.00 383.40H275.50M280.60 375.60L279.40 387.90M283.60 375.60L282.40 387.90M277.30 380.50H284.80M277.10 383.40H284.60M216.90 423.60L215.70 435.90M219.90 423.60L218.70 435.90M213.60 428.50H221.10M213.40 431.40H220.90M226.00 423.60L224.80 435.90M229.00 423.60L227.80 435.90M222.70 428.50H230.20M222.50 431.40H230.00M235.10 423.60L233.90 435.90M238.10 423.60L236.90 435.90M231.80 428.50H239.30M231.60 431.40H239.10M244.20 423.60L243.00 435.90M247.20 423.60L246.00 435.90M240.90 428.50H248.40M240.70 431.40H248.20M253.30 423.60L252.10 435.90M256.30 423.60L255.10 435.90M250.00 428.50H257.50M249.80 431.40H257.30M262.40 423.60L261.20 435.90M265.40 423.60L264.20 435.90M259.10 428.50H266.60M258.90 431.40H266.40M271.50 423.60L270.30 435.90M274.50 423.60L273.30 435.90M268.20 428.50H275.70M268.00 431.40H275.50M280.60 423.60L279.40 435.90M283.60 423.60L282.40 435.90M277.30 428.50H284.80M277.10 431.40H284.60M216.90 447.60L215.70 459.90M219.90 447.60L218.70 459.90M213.60 452.50H221.10M213.40 455.40H220.90M226.00 447.60L224.80 459.90M229.00 447.60L227.80 459.90M222.70 452.50H230.20M222.50 455.40H230.00M235.10 447.60L233.90 459.90M238.10 447.60L236.90 459.90M231.80 452.50H239.30M231.60 455.40H239.10M244.20 447.60L243.00 459.90M247.20 447.60L246.00 459.90M240.90 452.50H248.40M240.70 455.40H248.20M253.30 447.60L252.10 459.90M256.30 447.60L255.10 459.90M250.00 452.50H257.50M249.80 455.40H257.30M262.40 447.60L261.20 459.90M265.40 447.60L264.20 459.90M259.10 452.50H266.60M258.90 455.40H266.40M271.50 447.60L270.30 459.90M274.50 447.60L273.30 459.90M268.20 452.50H275.70M268.00 455.40H275.50M280.60 447.60L279.40 459.90M283.60 447.60L282.40 459.90M277.30 452.50H284.80M277.10 455.40H284.60M216.90 471.60L215.70 483.90M219.90 471.60L218.70 483.90M213.60 476.50H221.10M213.40 479.40H220.90M226.00 471.60L224.80 483.90M229.00 471.60L227.80 483.90M222.70 476.50H230.20M222.50 479.40H230.00M235.10 471.60L233.90 483.90M238.10 471.60L236.90 483.90M231.80 476.50H239.30M231.60 479.40H239.10M244.20 471.60L243.00 483.90M247.20 471.60L246.00 483.90M240.90 476.50H248.40M240.70 479.40H248.20M253.30 471.60L252.10 483.90M256.30 471.60L255.10 483.90M250.00 476.50H257.50M249.80 479.40H257.30M262.40 471.60L261.20 483.90M265.40 471.60L264.20 483.90M259.10 476.50H266.60M258.90 479.40H266.40M271.50 471.60L270.30 483.90M274.50 471.60L273.30 483.90M268.20 476.50H275.70M268.00 479.40H275.50M280.60 471.60L279.40 483.90M283.60 471.60L282.40 483.90M277.30 476.50H284.80M277.10 479.40H284.60M216.90 495.60L215.70 507.90M219.90 495.60L218.70 507.90M213.60 500.50H221.10M213.40 503.40H220.90M226.00 495.60L224.80 507.90M229.00 495.60L227.80 507.90M222.70 500.50H230.20M222.50 503.40H230.00M235.10 495.60L233.90 507.90M238.10 495.60L236.90 507.90M231.80 500.50H239.30M231.60 503.40H239.10M244.20 495.60L243.00 507.90M247.20 495.60L246.00 507.90M240.90 500.50H248.40M240.70 503.40H248.20M253.30 495.60L252.10 507.90M256.30 495.60L255.10 507.90M250.00 500.50H257.50M249.80 503.40H257.30M262.40 495.60L261.20 507.90M265.40 495.60L264.20 507.90M259.10 500.50H266.60M258.90 503.40H266.40M271.50 495.60L270.30 507.90M274.50 495.60L273.30 507.90M268.20 500.50H275.70M268.00 503.40H275.50M280.60 495.60L279.40 507.90M283.60 495.60L282.40 507.90M277.30 500.50H284.80M277.10 503.40H284.60M216.90 519.60L215.70 531.90M219.90 519.60L218.70 531.90M213.60 524.50H221.10M213.40 527.40H220.90M226.00 519.60L224.80 531.90M229.00 519.60L227.80 531.90M222.70 524.50H230.20M222.50 527.40H230.00M235.10 519.60L233.90 531.90M238.10 519.60L236.90 531.90M231.80 524.50H239.30M231.60 527.40H239.10M244.20 519.60L243.00 531.90M247.20 519.60L246.00 531.90M240.90 524.50H248.40M240.70 527.40H248.20M253.30 519.60L252.10 531.90M256.30 519.60L255.10 531.90M250.00 524.50H257.50M249.80 527.40H257.30M262.40 519.60L261.20 531.90M265.40 519.60L264.20 531.90M259.10 524.50H266.60M258.90 527.40H266.40M271.50 519.60L270.30 531.90M274.50 519.60L273.30 531.90M268.20 524.50H275.70M268.00 527.40H275.50M280.60 519.60L279.40 531.90M283.60 519.60L282.40 531.90M277.30 524.50H284.80M277.10 527.40H284.60M216.90 543.60L215.70 555.90M219.90 543.60L218.70 555.90M213.60 548.50H221.10M213.40 551.40H220.90M226.00 543.60L224.80 555.90M229.00 543.60L227.80 555.90M222.70 548.50H230.20M222.50 551.40H230.00M235.10 543.60L233.90 555.90M238.10 543.60L236.90 555.90M231.80 548.50H239.30M231.60 551.40H239.10M244.20 543.60L243.00 555.90M247.20 543.60L246.00 555.90M240.90 548.50H248.40M240.70 551.40H248.20M253.30 543.60L252.10 555.90M256.30 543.60L255.10 555.90M250.00 548.50H257.50M249.80 551.40H257.30M262.40 543.60L261.20 555.90M265.40 543.60L264.20 555.90M259.10 548.50H266.60M258.90 551.40H266.40M271.50 543.60L270.30 555.90M274.50 543.60L273.30 555.90M268.20 548.50H275.70M268.00 551.40H275.50M280.60 543.60L279.40 555.90M283.60 543.60L282.40 555.90M277.30 548.50H284.80M277.10 551.40H284.60M216.90 567.60L215.70 579.90M219.90 567.60L218.70 579.90M213.60 572.50H221.10M213.40 575.40H220.90M226.00 567.60L224.80 579.90M229.00 567.60L227.80 579.90M222.70 572.50H230.20M222.50 575.40H230.00M235.10 567.60L233.90 579.90M238.10 567.60L236.90 579.90M231.80 572.50H239.30M231.60 575.40H239.10M244.20 567.60L243.00 579.90M247.20 567.60L246.00 579.90M240.90 572.50H248.40M240.70 575.40H248.20M253.30 567.60L252.10 579.90M256.30 567.60L255.10 579.90M250.00 572.50H257.50M249.80 575.40H257.30M262.40 567.60L261.20 579.90M265.40 567.60L264.20 579.90M259.10 572.50H266.60M258.90 575.40H266.40M271.50 567.60L270.30 579.90M274.50 567.60L273.30 579.90M268.20 572.50H275.70M268.00 575.40H275.50M280.60 567.60L279.40 579.90M283.60 567.60L282.40 579.90M277.30 572.50H284.80M277.10 575.40H284.60M216.90 591.60L215.70 603.90M219.90 591.60L218.70 603.90M213.60 596.50H221.10M213.40 599.40H220.90M226.00 591.60L224.80 603.90M229.00 591.60L227.80 603.90M222.70 596.50H230.20M222.50 599.40H230.00M235.10 591.60L233.90 603.90M238.10 591.60L236.90 603.90M231.80 596.50H239.30M231.60 599.40H239.10M244.20 591.60L243.00 603.90M247.20 591.60L246.00 603.90M240.90 596.50H248.40M240.70 599.40H248.20M253.30 591.60L252.10 603.90M256.30 591.60L255.10 603.90M250.00 596.50H257.50M249.80 599.40H257.30M262.40 591.60L261.20 603.90M265.40 591.60L264.20 603.90M259.10 596.50H266.60M258.90 599.40H266.40M271.50 591.60L270.30 603.90M274.50 591.60L273.30 603.90M268.20 596.50H275.70M268.00 599.40H275.50M280.60 591.60L279.40 603.90M283.60 591.60L282.40 603.90M277.30 596.50H284.80M277.10 599.40H284.60M216.90 615.60L215.70 627.90M219.90 615.60L218.70 627.90M213.60 620.50H221.10M213.40 623.40H220.90M226.00 615.60L224.80 627.90M229.00 615.60L227.80 627.90M222.70 620.50H230.20M222.50 623.40H230.00M235.10 615.60L233.90 627.90M238.10 615.60L236.90 627.90M231.80 620.50H239.30M231.60 623.40H239.10M244.20 615.60L243.00 627.90M247.20 615.60L246.00 627.90M240.90 620.50H248.40M240.70 623.40H248.20M253.30 615.60L252.10 627.90M256.30 615.60L255.10 627.90M250.00 620.50H257.50M249.80 623.40H257.30M262.40 615.60L261.20 627.90M265.40 615.60L264.20 627.90M259.10 620.50H266.60M258.90 623.40H266.40M271.50 615.60L270.30 627.90M274.50 615.60L273.30 627.90M268.20 620.50H275.70M268.00 623.40H275.50M280.60 615.60L279.40 627.90M283.60 615.60L282.40 627.90M277.30 620.50H284.80M277.10 623.40H284.60M216.90 639.60L215.70 651.90M219.90 639.60L218.70 651.90M213.60 644.50H221.10M213.40 647.40H220.90M226.00 639.60L224.80 651.90M229.00 639.60L227.80 651.90M222.70 644.50H230.20M222.50 647.40H230.00M235.10 639.60L233.90 651.90M238.10 639.60L236.90 651.90M231.80 644.50H239.30M231.60 647.40H239.10M244.20 639.60L243.00 651.90M247.20 639.60L246.00 651.90M240.90 644.50H248.40M240.70 647.40H248.20M253.30 639.60L252.10 651.90M256.30 639.60L255.10 651.90M250.00 644.50H257.50M249.80 647.40H257.30M262.40 639.60L261.20 651.90M265.40 639.60L264.20 651.90M259.10 644.50H266.60M258.90 647.40H266.40M271.50 639.60L270.30 651.90M274.50 639.60L273.30 651.90M268.20 644.50H275.70M268.00 647.40H275.50M280.60 639.60L279.40 651.90M283.60 639.60L282.40 651.90M277.30 644.50H284.80M277.10 647.40H284.60M216.90 663.60L215.70 675.90M219.90 663.60L218.70 675.90M213.60 668.50H221.10M213.40 671.40H220.90M226.00 663.60L224.80 675.90M229.00 663.60L227.80 675.90M222.70 668.50H230.20M222.50 671.40H230.00M235.10 663.60L233.90 675.90M238.10 663.60L236.90 675.90M231.80 668.50H239.30M231.60 671.40H239.10M244.20 663.60L243.00 675.90M247.20 663.60L246.00 675.90M240.90 668.50H248.40M240.70 671.40H248.20M253.30 663.60L252.10 675.90M256.30 663.60L255.10 675.90M250.00 668.50H257.50M249.80 671.40H257.30M262.40 663.60L261.20 675.90M265.40 663.60L264.20 675.90M259.10 668.50H266.60M258.90 671.40H266.40M271.50 663.60L270.30 675.90M274.50 663.60L273.30 675.90M268.20 668.50H275.70M268.00 671.40H275.50M280.60 663.60L279.40 675.90M283.60 663.60L282.40 675.90M277.30 668.50H284.80M277.10 671.40H284.60" stroke="#0a0a0a" stroke-width="1.0" fill="none"/></svg>
<div style="position:absolute;left:208px;top:152px;width:82px;height:27px;border:2px solid #1d6b3c;box-sizing:border-box;"></div>
<div class="c" style="left:213px;top:154.86px;width:73px;color:#111;letter-spacing:-0.3px">=B2*EXP(0</div>
<div style="position:absolute;left:285px;top:174px;width:6px;height:6px;background:#1d6b3c;border:1px solid #fff;box-sizing:content-box;left:284px;top:173px;"></div>
<div style="position:absolute;left:215px;top:390px;width:104px;height:31px;background:#fff;border:2px solid #555;border-radius:6px;box-sizing:border-box;"></div>
<svg style="position:absolute;left:0;top:0" width="808" height="696"><path d="M222.2 398L221.0 410.2M225.2 398L224.0 410.2M218.9 402.6H226.4M218.7 405.5H226.2" stroke="#555" stroke-width="1.1" fill="none"/></svg>
<div style="position:absolute;left:227px;top:391px;width:128px;height:30px;box-sizing:border-box;background:#fbfbfb;border:1px solid #dcdcdc;border-radius:4px;box-shadow:1px 1px 1.5px rgba(0,0,0,0.35), 3px 7px 14px rgba(0,0,0,0.14);"></div>
<div class="t" style="left:234.5px;top:398.69px;font-size:17.5px;line-height:17.5px;color:#555d66;letter-spacing:0.2px;">Diagramrubrik</div>
<div style="position:absolute;left:648px;top:354px;width:200px;height:340px;background:#fff;border:1px solid #d0d0d0;box-sizing:border-box;"></div>
<div style="position:absolute;left:728px;top:647px;width:80px;height:1px;background:#d9d9d9;"></div>
<div class="t" style="right:94.5px;top:639.60px;font-size:13px;line-height:13px;color:#595959;">0</div>
<div style="position:absolute;left:728px;top:614px;width:80px;height:1px;background:#d9d9d9;"></div>
<div class="t" style="right:94.5px;top:606.60px;font-size:13px;line-height:13px;color:#595959;">20</div>
<div style="position:absolute;left:728px;top:580px;width:80px;height:1px;background:#d9d9d9;"></div>
<div class="t" style="right:94.5px;top:572.60px;font-size:13px;line-height:13px;color:#595959;">40</div>
<div style="position:absolute;left:728px;top:547px;width:80px;height:1px;background:#d9d9d9;"></div>
<div class="t" style="right:94.5px;top:539.60px;font-size:13px;line-height:13px;color:#595959;">60</div>
<div style="position:absolute;left:728px;top:514px;width:80px;height:1px;background:#d9d9d9;"></div>
<div class="t" style="right:94.5px;top:506.60px;font-size:13px;line-height:13px;color:#595959;">80</div>
<div style="position:absolute;left:728px;top:481px;width:80px;height:1px;background:#d9d9d9;"></div>
<div class="t" style="right:94.5px;top:473.60px;font-size:13px;line-height:13px;color:#595959;">100</div>
<div style="position:absolute;left:728px;top:447px;width:80px;height:1px;background:#d9d9d9;"></div>
<div class="t" style="right:94.5px;top:439.60px;font-size:13px;line-height:13px;color:#595959;">120</div>
<div style="position:absolute;left:728px;top:414px;width:80px;height:1px;background:#d9d9d9;"></div>
<div class="t" style="right:94.5px;top:406.60px;font-size:13px;line-height:13px;color:#595959;">140</div>
<div style="position:absolute;left:728px;top:414px;width:1px;height:234px;background:#bfbfbf;"></div>
<div style="position:absolute;left:728px;top:647px;width:80px;height:1px;background:#bfbfbf;"></div>
<div class="t" style="left:727.5px;transform:translateX(-50%);top:660.00px;font-size:13px;line-height:13px;color:#595959;">0</div>
<div class="t" style="left:676.5px;top:531px;font-size:14.8px;line-height:14.8px;color:#595959;transform:translate(-50%,-50%) rotate(-90deg);">Population size</div>
<svg style="position:absolute;left:0;top:0" width="808" height="696"><circle cx="731.80" cy="529.90" r="3.7" fill="#1b5e82"/><circle cx="737.00" cy="526.00" r="3.7" fill="#1b5e82"/><circle cx="741.90" cy="521.00" r="3.7" fill="#1b5e82"/><circle cx="747.00" cy="515.50" r="3.7" fill="#1b5e82"/><circle cx="750.90" cy="511.60" r="3.7" fill="#1b5e82"/><circle cx="755.90" cy="506.60" r="3.7" fill="#1b5e82"/><circle cx="761.00" cy="501.80" r="3.7" fill="#1b5e82"/><circle cx="766.00" cy="496.80" r="3.7" fill="#1b5e82"/><circle cx="770.00" cy="491.80" r="3.7" fill="#1b5e82"/><circle cx="774.90" cy="486.70" r="3.7" fill="#1b5e82"/><circle cx="779.70" cy="482.00" r="3.7" fill="#1b5e82"/><circle cx="784.00" cy="476.00" r="3.7" fill="#1b5e82"/><circle cx="789.00" cy="470.90" r="3.7" fill="#1b5e82"/><circle cx="794.00" cy="465.90" r="3.7" fill="#1b5e82"/><circle cx="798.80" cy="460.80" r="3.7" fill="#1b5e82"/><circle cx="802.70" cy="455.80" r="3.7" fill="#1b5e82"/><circle cx="807.00" cy="450.80" r="3.7" fill="#1b5e82"/><circle cx="811.50" cy="446.00" r="3.7" fill="#1b5e82"/></svg>
<div style="position:absolute;left:96px;top:686px;width:712px;height:10px;background:#fff;"></div>
<div style="position:absolute;left:97px;top:686px;width:253px;height:20px;background:#e6e8ec;border-radius:0 6px 0 0;"></div>
<div style="position:absolute;left:428px;top:686px;width:400px;height:20px;background:#ebe8e8;border-radius:6px 6px 0 0;"></div>
<div style="position:absolute;left:96px;top:686px;width:1px;height:10px;background:#cfcfcf;"></div>
</body></html>
